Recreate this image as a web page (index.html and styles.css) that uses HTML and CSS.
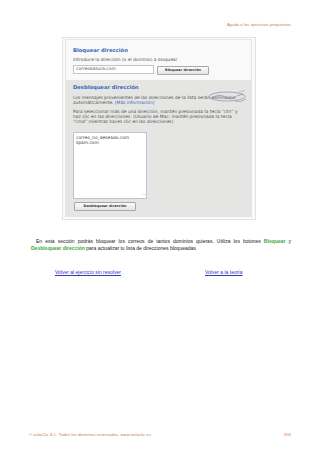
FILE: index.html
```html
<!DOCTYPE html>
<html lang="es">
<head>
<meta charset="utf-8">
<title>Ayuda a los ejercicios propuestos</title>
<link rel="stylesheet" href="styles.css">
</head>
<body>
<div class="page">
  <header class="top">Ayuda a los ejercicios propuestos</header>

  <div class="shot">
    <div class="panel">
      <section class="block">
        <h2 class="title">Bloquear dirección</h2>
        <p class="small">Introduce la dirección (o el dominio) a bloquear</p>
        <div class="row">
          <div class="input">correobasura.com</div>
          <div class="btn">Bloquear dirección</div>
        </div>
      </section>
      <section class="unblock">
        <h2 class="title">Desbloquear dirección</h2>
        <p class="small p1">Los mensajes provenientes de las direcciones de la lista serán eliminados<br>automáticamente. <span class="more">[Más información]</span></p>
        <p class="small p2">Para seleccionar más de una dirección, mantén presionada la tecla “ctrl” y<br>haz clic en las direcciones. (Usuario de Mac: mantén presionada la tecla<br>“cmd” mientras haces clic en las direcciones)</p>
        <div class="list">
          <div>correo_no_deseado.com</div>
          <div>spam.com</div>
          <span class="scroll"></span>
        </div>
        <div class="btn btn2">Desbloquear dirección</div>
        <svg class="stamp" width="44" height="14" viewBox="0 0 44 14">
          <ellipse cx="22" cy="6.5" rx="18" ry="4.5" fill="none" stroke="#8a8aa8" stroke-width="0.7"/>
          <path d="M8 8 Q14 3 20 7 T32 6 L38 4" fill="none" stroke="#7a7ab0" stroke-width="0.6"/>
          <path d="M30 11 Q36 13 41 9" fill="none" stroke="#d07070" stroke-width="0.6"/>
          <path d="M34 2 L40 0.5" fill="none" stroke="#9a9aaa" stroke-width="0.5"/>
        </svg>
      </section>
    </div>
  </div>

  <p class="text">En esta sección podrás bloquear los correos de tantos dominios quieras. Utiliza los botones <b class="g">Bloquear</b> y <b class="g">Desbloquear dirección</b> para actualizar tu lista de direcciones bloqueadas.</p>

  <nav class="links">
    <a href="#" class="l1">Volver al ejercicio sin resolver</a>
    <a href="#">Volver a la teoría</a>
  </nav>

  <footer class="foot">
    <span>© aulaClic S.L. Todos los derechos reservados. www.aulaclic.es</span>
    <span>356</span>
  </footer>
</div>
</body>
</html>
```

FILE: styles.css
```css
* { box-sizing: border-box; }
html, body { margin: 0; padding: 0; background: #fff; }
body { font-family: "Liberation Sans", Arial, sans-serif; color: #222; }

.page {
  width: 320px;
  height: 452px;
  padding: 22px 29px 15px 29px;
  display: flex;
  flex-direction: column;
}

.top {
  text-align: right;
  font-size: 4.3px;
  line-height: 5px;
  color: #cc7a48;
}

.shot {
  margin: 10px 0 0 33px;
  width: 194px;
  border: 1px solid #e2e2e2;
  padding: 1px 3px 2px 2px;
  background: #fafafa;
}
.panel {
  border: 1px solid #e6e6e6;
  font-family: "DejaVu Sans", Verdana, sans-serif;
}
.block {
  background: #f9f9f9;
  padding: 7px 6px 5px 7px;
  height: 40px;
}
.title {
  margin: 0;
  font-size: 5.2px;
  line-height: 6px;
  font-weight: bold;
  color: #3b67b8;
}
.small {
  margin: 0;
  font-size: 4.4px;
  line-height: 5px;
  color: #555;
  white-space: nowrap;
}
.block .small { margin-top: 4px; }
.row {
  display: flex;
  align-items: flex-start;
  gap: 3px;
  margin-top: 3px;
}
.input {
  width: 81px;
  height: 8.5px;
  background: #fff;
  border: 1px solid #c4c4c4;
  font-size: 4.4px;
  line-height: 6.5px;
  padding-left: 2px;
  color: #555;
}
.btn {
  margin-top: 1px;
  width: 52px;
  height: 8.5px;
  border: 1px solid #a8a8a8;
  border-radius: 1px;
  background: linear-gradient(#fbfbfb, #e4e4e4);
  font-size: 3.4px;
  line-height: 6.5px;
  font-weight: bold;
  text-align: center;
  color: #333;
}
.unblock {
  position: relative;
  background: #e5e5e3;
  padding: 4px 2px 5px 7px;
}
.p1 { margin-top: 5px; }
.p2 { margin-top: 3.5px; }
.more { color: #3b67b8; }
.list {
  position: relative;
  margin-top: 8px;
  width: 74px;
  height: 67px;
  background: #fff;
  border: 1px solid #b9c4d6;
  padding: 2px 4px 0 2px;
  font-size: 4.4px;
  line-height: 5.3px;
  color: #444;
}
.scroll {
  position: absolute;
  right: 0;
  bottom: 1px;
  width: 3px;
  height: 3px;
  border-top: 1px solid #ddd;
}
.btn2 {
  margin: 3px 0 0 1px;
  width: 62px;
  height: 9px;
}
.stamp {
  position: absolute;
  left: 139px;
  top: 10px;
  pointer-events: none;
}

.text {
  margin: 18px 0 0 2px;
  font-size: 5px;
  line-height: 7.7px;
  text-indent: 5px;
  text-align: justify;
  color: #222;
}
.g { color: #3aa83a; }

.links {
  display: flex;
  margin-top: 16px;
  padding-left: 26px;
  font-size: 5px;
  line-height: 6px;
}
.links a { color: #3636c4; text-decoration: underline; }
.l1 { width: 150px; }

.foot {
  margin-top: auto;
  display: flex;
  justify-content: space-between;
  font-size: 4.3px;
  line-height: 5px;
  color: #cc7a48;
}
```
